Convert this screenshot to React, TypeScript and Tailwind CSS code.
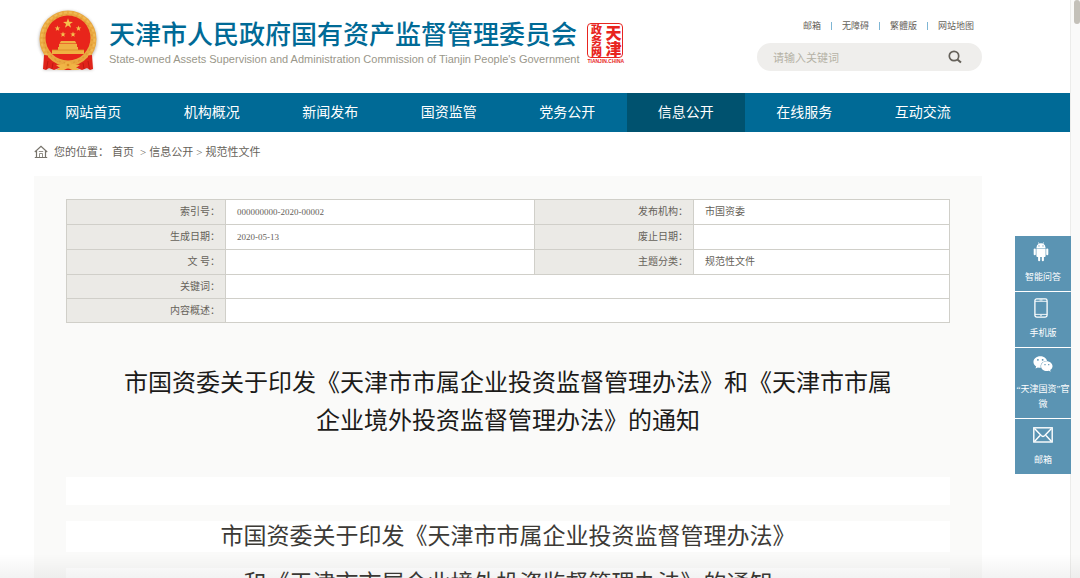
import { FaWeixin } from "react-icons/fa";

const topLinks = ["邮箱", "无障碍", "繁體版", "网站地图"];

const navItems = [
  "网站首页",
  "机构概况",
  "新闻发布",
  "国资监管",
  "党务公开",
  "信息公开",
  "在线服务",
  "互动交流"
];

const activeItem = "信息公开";

const infoRows = [
  ["索引号：", "000000000-2020-00002", "发布机构：", "市国资委"],
  ["生成日期：", "2020-05-13", "废止日期：", ""],
  ["文 号：", "", "主题分类：", "规范性文件"]
];

const wideRows = ["关键词：", "内容概述："];

const labelCell = "border border-[#d0cfc9] bg-[#ebeae6] pr-[5px] text-right font-normal";
const valueCell = "border border-[#d0cfc9] bg-white pl-[11px] text-left";

const star = "M0,-1 L0.24,-0.32 L0.95,-0.31 L0.38,0.12 L0.59,0.81 L0,0.4 L-0.59,0.81 L-0.38,0.12 L-0.95,-0.31 L-0.24,-0.32 Z";

function Emblem() {
  return (
    <svg viewBox="0 0 64 66" className="h-[66px] w-16 shrink-0" aria-hidden="true">
      <defs>
        <filter id="glow" x="-20%" y="-20%" width="140%" height="140%">
          <feGaussianBlur stdDeviation="1.6" />
        </filter>
      </defs>
      <circle cx="32" cy="32" r="29" fill="#8f8a84" opacity="0.6" filter="url(#glow)" />
      <path d="M11 48 L7 62 L57 62 L54 48 Z" fill="#8f8a84" opacity="0.5" filter="url(#glow)" />
      <circle cx="32" cy="31" r="28.5" fill="#e9a840" />
      <circle cx="32" cy="31" r="26.5" fill="none" stroke="#f0b954" strokeWidth="2" strokeDasharray="3 2" />
      <circle cx="32" cy="31" r="24" fill="none" stroke="#df9a35" strokeWidth="1.5" strokeDasharray="2 3" />
      <circle cx="32" cy="30" r="22.5" fill="#e8251b" />
      <g fill="#f6c14e">
        <path d={star} transform="translate(32 15.5) scale(5.2)" />
        <path d={star} transform="translate(21.5 20.5) scale(2.9)" />
        <path d={star} transform="translate(42.5 20.5) scale(2.9)" />
        <path d={star} transform="translate(27 26.5) scale(2.9)" />
        <path d={star} transform="translate(37 26.5) scale(2.9)" />
      </g>
      <g fill="#efb143">
        <path d="M25 33 h14 l1.5 2.5 h-17 z" />
        <path d="M23 36 h18 v3 h-18 z" />
        <path d="M22 39 h20 v3 h6 v4 h-32 v-4 h6 z" />
      </g>
      <path d="M16 42 H48" stroke="#d98b25" strokeWidth="0.8" />
      <path d="M8 47 Q13 47 17 51 L24 55 Q32 58 40 55 L47 51 Q51 47 56 47 L57 61 L54 62 L51 60 L46 62 L41 60 L37 62 H27 L23 60 L18 62 L13 60 L10 62 L7 61 Z" fill="#e0241a" />
      <path d="M12 45 Q20 56 32 56 Q44 56 52 45 L52 49 Q44 58 32 58 Q20 58 12 49 Z" fill="#eaa93f" />
      <path d="M20 57 L28 56 L32 58 L36 56 L44 57 L40 60 L44 62 L36 62 L32 60 L28 62 L20 62 L24 60 Z" fill="#f0b545" />
      <circle cx="32" cy="57" r="3.4" fill="#efb143" />
      <circle cx="32" cy="57" r="1.3" fill="#d98b25" />
      <path d="M12 53 L10.5 61 M17 55 L16 61 M52 53 L53.5 61 M47 55 L48 61" stroke="#b9150f" strokeWidth="0.8" />
    </svg>
  );
}

function Seal() {
  return (
    <div className="w-9 font-['Noto_Sans_CJK_SC',sans-serif] font-black text-[#e8251f]">
      <div className="flex h-[35px] items-center justify-center rounded border border-[#e8251f]">
        <span className="text-[11px] leading-4 [writing-mode:vertical-rl]">政务网</span>
        <span className="text-base leading-[18px] [writing-mode:vertical-rl]">天津</span>
      </div>
      <p className="text-center font-['Liberation_Sans',sans-serif] text-[5px] leading-[6px]">TIANJIN.CHINA</p>
    </div>
  );
}

function HomeIcon() {
  return (
    <svg viewBox="0 0 14 14" className="size-[14px]" fill="none" stroke="#77736b" aria-hidden="true">
      <path d="M0.8 7 L7 1.2 L13.2 7" strokeWidth="1.2" />
      <path d="M2.5 6 V12.5 H11.5 V6 M0.8 12.5 H13.2" strokeWidth="1.2" />
      <path d="M5.5 12.5 V8.5 H8.5 V12.5 M4.8 6.5 H9.2" strokeWidth="0.8" />
    </svg>
  );
}

function SearchIcon() {
  return (
    <svg viewBox="0 0 14 14" className="size-[14px]" fill="none" stroke="#65615a" strokeWidth="1.7" aria-hidden="true">
      <circle cx="6" cy="6" r="4.7" />
      <path d="M9.4 9.4 L13 12.6" strokeWidth="2" />
    </svg>
  );
}

function RobotIcon() {
  return (
    <svg viewBox="0 0 16 20" className="mr-1 h-5 w-4" fill="#fff" aria-hidden="true">
      <path d="M3.4 6 Q3.6 2.9 5.7 1.8 L5 0.6 L5.5 0.3 L6.3 1.5 Q8 1 9.7 1.5 L10.5 0.3 L11 0.6 L10.3 1.8 Q12.4 2.9 12.6 6 Z" />
      <circle cx="6" cy="3.9" r="0.6" fill="#5b94b3" />
      <circle cx="10" cy="3.9" r="0.6" fill="#5b94b3" />
      <path d="M3.4 6.6 H12.6 V14 Q12.6 15 11.6 15 H10.9 V18.2 Q10.9 19.3 9.9 19.3 Q8.8 19.3 8.8 18.2 V15 H7.2 V18.2 Q7.2 19.3 6.1 19.3 Q5.1 19.3 5.1 18.2 V15 H4.4 Q3.4 15 3.4 14 Z" />
      <rect x="0.7" y="6.4" width="2.1" height="6.8" rx="1.05" />
      <rect x="13.2" y="6.4" width="2.1" height="6.8" rx="1.05" />
    </svg>
  );
}

function PhoneIcon() {
  return (
    <svg viewBox="0 0 14 20" className="mr-1 h-5 w-[14px]" fill="none" stroke="#fff" aria-hidden="true">
      <rect x="0.9" y="0.9" width="12.2" height="18.2" rx="1.8" strokeWidth="1.3" />
      <path d="M1 3.3 H13 M1 16.4 H13" strokeWidth="0.9" />
      <path d="M5.5 2 H8.5 M6.2 17.7 H7.8" strokeWidth="0.9" />
    </svg>
  );
}

function MailIcon() {
  return (
    <svg viewBox="0 0 20 16" className="h-4 w-5" fill="none" stroke="#fff" strokeWidth="1.4" aria-hidden="true">
      <rect x="0.8" y="0.8" width="18.4" height="14.2" />
      <path d="M1.5 1.5 L8.2 8.6 Q10 10.2 11.8 8.6 L18.5 1.5 M1.5 14.5 L7 8.6 M18.5 14.5 L13 8.6" />
    </svg>
  );
}

const sideLinks = [
  { label: "智能问答", icon: <RobotIcon /> },
  { label: "手机版", icon: <PhoneIcon /> },
  { label: "“天津国资”官微", icon: <FaWeixin className="size-5" /> },
  { label: "邮箱", icon: <MailIcon /> }
];

export default function App() {
  return (
    <div
      lang="zh-CN"
      className="relative flex h-screen overflow-hidden bg-white font-['Liberation_Serif','Noto_Sans_CJK_SC',serif] text-[#66625a]"
    >
      <div className="min-w-0 flex-1">
        <header className="flex h-[93px] justify-between pr-[88px] pl-9">
          <div className="flex items-start pt-2">
            <Emblem />
            <div className="ml-[9px] pt-[7px]">
              <h1 className="font-['Noto_Sans_CJK_SC',sans-serif] text-[26px] leading-9 font-medium whitespace-nowrap text-[#006a96]">
                天津市人民政府国有资产监督管理委员会
              </h1>
              <p className="font-['Liberation_Sans',sans-serif] text-[11px] leading-4 whitespace-nowrap text-[#9a978a]">
                State-owned Assets Supervision and Administration Commission of Tianjin People's Government
              </p>
            </div>
            <div className="ml-2 pt-[15px]">
              <Seal />
            </div>
          </div>

          <div className="flex w-[225px] flex-col pt-[18px]">
            <ul className="flex justify-end pr-2 text-[9px] leading-4">
              {topLinks.map((link, index) => (
                <li key={link} className="flex items-center">
                  {index > 0 && <span className="mx-[10px] h-2 w-px bg-[#7fb6d4]" />}
                  <a href="#">{link}</a>
                </li>
              ))}
            </ul>
            <form className="mt-[9px] flex h-7 items-center rounded-full bg-[#efeeec] pr-5 pl-4">
              <input
                type="text"
                aria-label="请输入关键词"
                placeholder="请输入关键词"
                className="min-w-0 flex-1 font-['Noto_Sans_CJK_SC',sans-serif] text-[11px] outline-none placeholder:text-[#b5b2a6]"
              />
              <button type="button" aria-label="搜索">
                <SearchIcon />
              </button>
            </form>
          </div>
        </header>

        <nav className="flex h-[39px] bg-[#006a96] pr-[88px] pl-[34px]">
          {navItems.map((item) => (
            <a
              key={item}
              href="#"
              className={`flex flex-1 items-center justify-center text-sm text-white ${
                item === activeItem ? "bg-[#00526f]" : ""
              }`}
            >
              {item}
            </a>
          ))}
        </nav>

        <main className="pr-[88px] pl-[34px]">
          <div className="flex h-11 items-center pb-1 text-[11px]">
            <HomeIcon />
            <span className="ml-[6px]">您的位置：</span>
            <a href="#" className="ml-[3px]">首页</a>
            <span className="mr-[3px] ml-[6px]">&gt;</span>
            <a href="#">信息公开</a>
            <span className="mx-[3px]">&gt;</span>
            <a href="#">规范性文件</a>
          </div>

          <article className="bg-[#fafaf9] px-8 pt-[23px]">
            <table className="w-full table-fixed border-collapse text-[10px] leading-4">
              <colgroup>
                <col className="w-[18%]" />
                <col className="w-[35%]" />
                <col className="w-[18%]" />
                <col className="w-[29%]" />
              </colgroup>
              <tbody>
                {infoRows.map(([label, value, otherLabel, otherValue]) => (
                  <tr key={label} className="h-[25px]">
                    <th scope="row" className={labelCell}>{label}</th>
                    <td className={`${valueCell} text-[9px]`}>{value}</td>
                    <th scope="row" className={labelCell}>{otherLabel}</th>
                    <td className={valueCell}>{otherValue}</td>
                  </tr>
                ))}
                {wideRows.map((label) => (
                  <tr key={label} className="h-6">
                    <th scope="row" className={labelCell}>{label}</th>
                    <td colSpan={3} className={valueCell} />
                  </tr>
                ))}
              </tbody>
            </table>

            <h2 className="mt-[41px] px-12 text-center text-2xl leading-[38px] text-[#1c1b19]">
              市国资委关于印发《天津市市属企业投资监督管理办法》和《天津市市属企业境外投资监督管理办法》的通知
            </h2>

            <div className="mt-[37px] flex flex-col gap-4 text-center text-[23px] leading-[31px] text-[#3c3a36]">
              <p className="h-7 bg-white" />
              <p className="bg-white">市国资委关于印发《天津市市属企业投资监督管理办法》</p>
              <p className="bg-white">和《天津市市属企业境外投资监督管理办法》的通知</p>
            </div>
          </article>
        </main>
      </div>

      <div className="w-[10px] shrink-0 border-l border-[#ececea] bg-[#fafaf9] pl-[3px]">
        <div className="h-6 rounded-full bg-[#c4c1b9]" />
      </div>

      <aside className="absolute top-[236px] right-[9px] flex w-14 flex-col gap-px text-center text-[9px] leading-[15px] text-white">
        {sideLinks.map(({ label, icon }) => (
          <a key={label} href="#" className="flex flex-col items-center bg-[#5b94b3] pt-[6px] pb-[6px]">
            <span className="flex h-5 items-center">{icon}</span>
            <span className="mt-2">{label}</span>
          </a>
        ))}
      </aside>

      <div className="pointer-events-none absolute inset-x-0 bottom-0 h-6 bg-linear-to-b from-transparent to-black/5" />
    </div>
  );
}
